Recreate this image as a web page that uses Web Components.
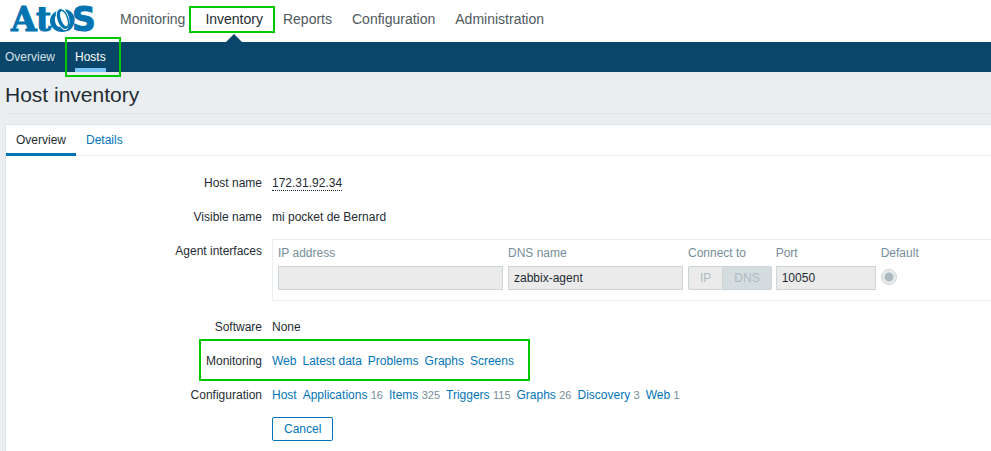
<!DOCTYPE html>
<html lang="en">
<head>
<meta charset="utf-8">
<title>Host inventory</title>
<style>
  body {
    margin: 0;
    background: #ebeef0;
    color: #1f2c33;
    font: 12px/14px "Liberation Sans", Arial, sans-serif;
    overflow-x: hidden;
    --link: #0275b8;
    --mark: #00c800;
    --navy: #0a466a;
    --line: #dfe4e7;
    --field: #ebebeb;
    --field-line: #ccd5d9;
    --muted: #768d99;
  }
</style>
</head>
<body>
<inventory-page></inventory-page>

<script>
const define = (name, html, setup) => {
  const template = document.createElement('template');
  template.innerHTML = html;
  customElements.define(name, class extends HTMLElement {
    constructor() {
      super();
      this.attachShadow({ mode: 'open' }).append(template.content.cloneNode(true));
    }
    connectedCallback() {
      if (setup) setup(this, this.shadowRoot);
    }
  });
};

define('brand-logo', `
  <style>
    :host { display: block; }
    svg { display: block; overflow: visible; }
    text { font: bold 33px "DejaVu Serif", serif; fill: #0073b1; stroke: #0073b1; stroke-width: 1; }
    .s { font-family: "DejaVu Sans", sans-serif; }
  </style>
  <svg width="92" height="42" viewBox="-2 -6 92 42" role="img" aria-label="Atos">
    <text x="0" y="25">A</text>
    <text x="25" y="25">t</text>
    <text class="s" x="61" y="25">S</text>
    <ellipse cx="51" cy="15" rx="12" ry="11" fill="#0073b1"/>
    <ellipse cx="47" cy="15" rx="3" ry="6" fill="#fff" transform="rotate(-12 47 15)"/>
    <g transform="rotate(-20 52 13)">
      <ellipse cx="52" cy="13" rx="6" ry="11" fill="#0073b1" stroke="#fff" stroke-width="1"/>
      <ellipse cx="53" cy="13" rx="3" ry="8" fill="#fff"/>
    </g>
    <path d="M54 3C63 5 66 13 62 20C60 24 58 25 55 25C60 19 60 11 54 3Z" fill="#0073b1"/>
  </svg>`);

define('nav-item', `
  <style>
    :host { display: block; position: relative; }
    a { display: block; color: #4f5960; text-decoration: none; font-size: 14px; line-height: 18px; padding: 10px 10px 14px; }
    :host([selected]) a { color: #1f2c33; }
    :host([selected]) a::after {
      content: ""; position: absolute; left: 50%; bottom: 0; margin-left: -8px;
      border: 8px solid transparent; border-top: 0; border-bottom-color: var(--navy);
    }
    :host([selected])::after {
      content: ""; position: absolute; inset: 6px -2px 9px -6px; border: 2px solid var(--mark); pointer-events: none;
    }
  </style>
  <a href="#"><slot></slot></a>`);

define('sub-nav-item', `
  <style>
    :host { display: block; position: relative; }
    a { display: block; color: #d5e0e7; text-decoration: none; padding: 8px 0 4px; border-bottom: 4px solid transparent; }
    :host([selected]) a { color: #fff; border-color: #7cc3f5; }
    :host([selected])::after {
      content: ""; position: absolute; inset: -5px -15px -5px -10px; border: 2px solid var(--mark); z-index: 1; pointer-events: none;
    }
  </style>
  <a href="#"><slot></slot></a>`);

define('page-header', `
  <style>
    :host { display: block; }
    header { display: flex; background: #fff; }
    brand-logo { padding: 0 9px; }
    .main { display: flex; }
    .sub { display: flex; gap: 20px; padding: 0 5px; background: var(--navy); }
  </style>
  <header>
    <brand-logo></brand-logo>
    <nav class="main" aria-label="Main">
      <nav-item>Monitoring</nav-item>
      <nav-item selected>Inventory</nav-item>
      <nav-item>Reports</nav-item>
      <nav-item>Configuration</nav-item>
      <nav-item>Administration</nav-item>
    </nav>
  </header>
  <nav class="sub" aria-label="Inventory">
    <sub-nav-item>Overview</sub-nav-item>
    <sub-nav-item selected>Hosts</sub-nav-item>
  </nav>`);

define('page-title', `
  <style>
    :host { display: block; margin-left: 5px; border-bottom: 1px solid var(--line); }
    h1 { margin: 0; padding: 11px 0 6px; font-size: 21px; font-weight: normal; line-height: 24px; }
  </style>
  <h1><slot></slot></h1>`);

define('tab-bar', `
  <style>
    :host { display: flex; border-bottom: 1px solid #ebeef0; }
    button {
      font: inherit; color: var(--link); background: none; border: 0; border-bottom: 3px solid transparent;
      margin: 0 0 -1px; padding: 8px 10px 6px;
    }
    [aria-selected=true] { color: #1f2c33; border-color: #0275b8; }
  </style>
  <button role="tab" aria-selected="true">Overview</button>
  <button role="tab" aria-selected="false">Details</button>`,
  host => host.setAttribute('role', 'tablist'));

define('form-row', `
  <style>
    :host { display: grid; grid-template-columns: 256px 1fr; column-gap: 10px; position: relative; }
    .label { text-align: right; }
    :host([highlight])::after {
      content: ""; position: absolute; left: 193px; width: 327px; top: -15px; bottom: -13px;
      border: 2px solid var(--mark); pointer-events: none;
    }
  </style>
  <div class="label"></div>
  <div><slot></slot></div>`,
  (host, root) => { root.querySelector('.label').textContent = host.getAttribute('label') || ''; });

define('link-item', `
  <style>
    :host { display: inline-block; margin-right: 6px; }
    a { color: var(--link); text-decoration: none; }
    span { color: var(--muted); font-size: 11px; }
  </style>
  <a href="#"><slot></slot></a> <span></span>`,
  (host, root) => { root.querySelector('span').textContent = host.getAttribute('count') || ''; });

define('interface-table', `
  <style>
    :host { display: block; border: 1px solid #ebeef0; border-right: 0; padding: 5px 5px 10px; margin: -5px 0 0; }
    table { border-collapse: collapse; }
    th { padding: 1px 5px 6px 0; text-align: left; font-weight: normal; color: var(--muted); line-height: 14px; }
    td { padding: 0 5px 0 0; vertical-align: top; }
    th:nth-child(3), td:nth-child(3) { padding-right: 4px; }
    input[type=text] {
      display: block; box-sizing: border-box; height: 24px; margin: 0; padding: 0 5px; font: inherit;
      color: #1f2c33; background: var(--field); border: 1px solid var(--field-line); border-radius: 0;
    }
    .ip { width: 225px; } .dns { width: 175px; } .port { width: 100px; }
    fieldset {
      display: flex; margin: 0; padding: 0; border: 1px solid var(--field-line); border-radius: 2px;
      background: var(--field); color: #acbbc2; line-height: 22px;
    }
    label { padding: 0 11px; }
    label:has(:checked) { background: #d4dce0; box-shadow: -1px 0 var(--field-line); margin-left: 1px; }
    fieldset input { position: absolute; opacity: 0; pointer-events: none; }
    .default {
      appearance: none; display: block; box-sizing: border-box; width: 16px; height: 16px; margin: 3px 0 0;
      border: 1px solid var(--field-line); border-radius: 50%;
      background: radial-gradient(circle, #acbbc2 0 4px, var(--field) 5px);
    }
  </style>
  <table>
    <thead><tr><th>IP address</th><th>DNS name</th><th>Connect to</th><th>Port</th><th>Default</th></tr></thead>
    <tbody><tr>
      <td><input class="ip" type="text" readonly aria-label="IP address"></td>
      <td><input class="dns" type="text" readonly aria-label="DNS name" value="zabbix-agent"></td>
      <td><fieldset aria-label="Connect to">
        <label><input type="radio" name="connect" disabled>IP</label>
        <label><input type="radio" name="connect" disabled checked>DNS</label>
      </fieldset></td>
      <td><input class="port" type="text" readonly aria-label="Port" value="10050"></td>
      <td><input class="default" type="radio" aria-label="Default" disabled checked></td>
    </tr></tbody>
  </table>`);

define('inventory-page', `
  <style>
    :host { display: block; }
    main { margin: 10px 0 0 5px; background: #fff; border: 1px solid var(--line); border-right: 0; }
    form { display: flex; flex-direction: column; gap: 20px; padding: 20px 0 11px; }
    .host { color: inherit; text-decoration: none; border-bottom: 1px dotted #1f2c33; }
    .interfaces { margin-bottom: -1px; }
    .actions { margin-top: -5px; }
    .actions button {
      display: block; height: 24px; padding: 0 11px; font: inherit; color: var(--link);
      background: #fff; border: 1px solid var(--link); border-radius: 2px;
    }
  </style>
  <page-header></page-header>
  <page-title>Host inventory</page-title>
  <main>
    <tab-bar></tab-bar>
    <form>
      <form-row label="Host name"><a class="host" href="#">172.31.92.34</a></form-row>
      <form-row label="Visible name">mi pocket de Bernard</form-row>
      <form-row class="interfaces" label="Agent interfaces"><interface-table></interface-table></form-row>
      <form-row label="Software">None</form-row>
      <form-row label="Monitoring" highlight><link-item>Web</link-item><link-item>Latest data</link-item><link-item>Problems</link-item><link-item>Graphs</link-item><link-item>Screens</link-item></form-row>
      <form-row label="Configuration"><link-item>Host</link-item><link-item count="16">Applications</link-item><link-item count="325">Items</link-item><link-item count="115">Triggers</link-item><link-item count="26">Graphs</link-item><link-item count="3">Discovery</link-item><link-item count="1">Web</link-item></form-row>
      <form-row class="actions"><button type="button">Cancel</button></form-row>
    </form>
  </main>`);
</script>
</body>
</html>
